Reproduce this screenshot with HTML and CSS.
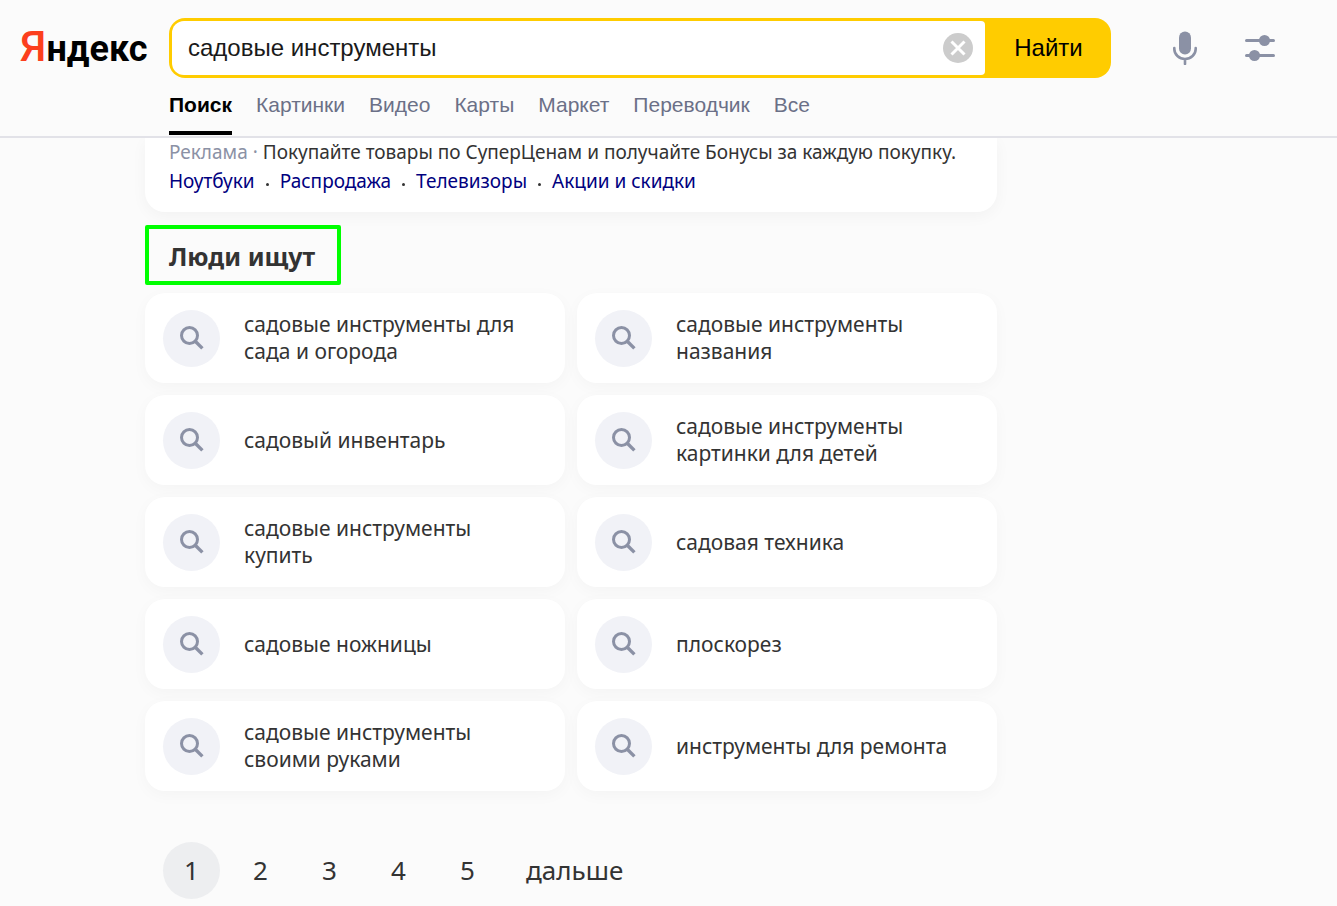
FILE: index.html
```html
<!DOCTYPE html>
<html lang="ru">
<head>
<meta charset="utf-8">
<meta name="viewport" content="width=device-width, initial-scale=1">
<title>садовые инструменты — Яндекс</title>
<link rel="stylesheet" href="styles.css">
</head>
<body>
<svg class="defs" aria-hidden="true">
  <symbol id="lens" viewBox="0 0 24 24"><circle cx="9.5" cy="9.5" r="8" fill="none" stroke="currentColor" stroke-width="3"/><path d="M15 15l7.400 7.400" stroke="currentColor" stroke-width="3.400"/></symbol>
</svg>
<header class="header">
  <div class="header-row">
    <a class="logo" href="#"><span class="logo-first">Я</span>ндекс</a>
    <form class="search">
      <div class="search-field">
        <input class="search-input" type="text" aria-label="Запрос" value="садовые инструменты">
        <button class="clear" type="reset" aria-label="Очистить">
          <svg width="30" height="30" viewBox="0 0 30 30"><circle cx="15" cy="15" r="15" fill="#ccc"/><path d="M8.500 8.500l13 13M21.500 8.500l-13 13" stroke="#fff" stroke-width="3"/></svg>
        </button>
      </div>
      <button class="search-button" type="button">Найти</button>
    </form>
    <div class="tools">
      <button class="tool" type="button" aria-label="Голосовой поиск">
        <svg width="24" height="34" viewBox="0 0 24 34"><rect x="6" y="0.500" width="12" height="23" rx="6" fill="#8b91a5"/><path d="M1.300 17v1a10.700 10 0 0 0 21.400 0v-1M12 28v5" fill="none" stroke="#8b91a5" stroke-width="2.600" stroke-linecap="round"/></svg>
      </button>
      <button class="tool" type="button" aria-label="Настройки">
        <svg width="30" height="26" viewBox="0 0 30 26"><path d="M1.500 5.500h27M1.500 20.500h27" stroke="#8b91a5" stroke-width="3" stroke-linecap="round"/><circle cx="19.500" cy="5.500" r="5.500" fill="#8b91a5"/><circle cx="9.500" cy="20.500" r="5.500" fill="#8b91a5"/></svg>
      </button>
    </div>
  </div>
  <nav class="tabs">
    <a class="tab tab-active" href="#">Поиск</a>
    <a class="tab" href="#">Картинки</a>
    <a class="tab" href="#">Видео</a>
    <a class="tab" href="#">Карты</a>
    <a class="tab" href="#">Маркет</a>
    <a class="tab" href="#">Переводчик</a>
    <a class="tab" href="#">Все</a>
  </nav>
</header>
<main class="content">
  <section class="ad">
    <p class="ad-text"><span class="ad-label">Реклама ·</span> Покупайте товары по СуперЦенам и получайте Бонусы за каждую покупку.</p>
    <div class="ad-links"><a href="#">Ноутбуки</a><span class="dot"></span><a href="#">Распродажа</a><span class="dot"></span><a href="#">Телевизоры</a><span class="dot"></span><a href="#">Акции и скидки</a></div>
  </section>
  <h2 class="title">Люди ищут</h2>
  <div class="grid">
    <a class="card" href="#"><span class="lens"><svg><use href="#lens"/></svg></span><span class="query">садовые инструменты для сада и огорода</span></a>
    <a class="card" href="#"><span class="lens"><svg><use href="#lens"/></svg></span><span class="query">садовые инструменты названия</span></a>
    <a class="card" href="#"><span class="lens"><svg><use href="#lens"/></svg></span><span class="query">садовый инвентарь</span></a>
    <a class="card" href="#"><span class="lens"><svg><use href="#lens"/></svg></span><span class="query">садовые инструменты картинки для детей</span></a>
    <a class="card" href="#"><span class="lens"><svg><use href="#lens"/></svg></span><span class="query">садовые инструменты купить</span></a>
    <a class="card" href="#"><span class="lens"><svg><use href="#lens"/></svg></span><span class="query">садовая техника</span></a>
    <a class="card" href="#"><span class="lens"><svg><use href="#lens"/></svg></span><span class="query">садовые ножницы</span></a>
    <a class="card" href="#"><span class="lens"><svg><use href="#lens"/></svg></span><span class="query">плоскорез</span></a>
    <a class="card" href="#"><span class="lens"><svg><use href="#lens"/></svg></span><span class="query">садовые инструменты своими руками</span></a>
    <a class="card" href="#"><span class="lens"><svg><use href="#lens"/></svg></span><span class="query">инструменты для ремонта</span></a>
  </div>
  <nav class="pager" aria-label="Страницы">
    <a class="page page-current" href="#">1</a>
    <a class="page" href="#">2</a>
    <a class="page" href="#">3</a>
    <a class="page" href="#">4</a>
    <a class="page" href="#">5</a>
    <a class="page-next" href="#">дальше</a>
  </nav>
</main>
</body>
</html>
```
FILE: styles.css
```css
* { box-sizing: border-box; }
body {
  margin: 0;
  background: #fbfbfb;
  color: #333;
  font-family: "Noto Sans", sans-serif;
}
a { color: inherit; text-decoration: none; }
button { border: 0; padding: 0; background: none; cursor: pointer; }
svg { display: block; }
.defs { display: none; }

.header {
  position: relative;
  z-index: 1;
  padding-top: 18px;
  background: #fbfbfb;
  border-bottom: 2px solid #e2e2e8;
  font-family: "Liberation Sans", Arial, sans-serif;
}
.header-row { display: flex; align-items: center; }
.logo {
  flex: 0 0 169px;
  padding: 0 0 2px 20px;
  font: bold 36px/48px Roboto, sans-serif;
  color: #000;
}
.logo-first { color: #fc3f1d; font-weight: 500; font-size: 43px; }
.search {
  display: flex;
  flex: 0 1 942px;
  height: 60px;
  padding: 3px;
  background: #fc0;
  border-radius: 16px;
}
.search-field {
  display: flex;
  flex: 1;
  align-items: center;
  min-width: 0;
  padding: 0 12px 0 16px;
  background: #fff;
  border-radius: 12px 4px 4px 12px;
}
.search-input {
  flex: 1;
  min-width: 0;
  padding: 0;
  border: 0;
  outline: 0;
  background: none;
  color: #1a1a1a;
  font: 24px "Liberation Sans", Arial, sans-serif;
}
.search-button {
  flex: 0 0 123px;
  padding-left: 4px;
  color: #000;
  font: 24px "Liberation Sans", Arial, sans-serif;
}
.tools {
  display: flex;
  align-items: center;
  gap: 48px;
  margin-left: auto;
  padding-right: 62px;
}
.tabs {
  display: flex;
  gap: 24px;
  padding: 0 0 1px 169px;
}
.tab {
  padding: 15px 0 14px;
  color: #6b7087;
  font-size: 21px;
  line-height: 24px;
  border-bottom: 4px solid transparent;
}
.tab-active { color: #000; font-weight: bold; border-color: #000; }

.content { max-width: 997px; padding-left: 145px; }
.ad {
  padding: 0 24px 16px;
  background: #fff;
  border-radius: 0 0 20px 20px;
  box-shadow: 0 4px 16px rgba(0, 0, 0, 0.04);
  font-size: 19px;
  line-height: 29px;
}
.ad-text { margin: 0; }
.ad-label { color: #8b91a5; }
.ad-links { display: flex; align-items: center; gap: 11px; color: #00007f; }
.dot { width: 3px; height: 3px; margin-top: 6px; border-radius: 50%; background: #333; }
.title {
  width: max-content;
  margin: 13px 0 8px;
  padding: 13px 22px 11px 20px;
  border: 4px solid #0f0;
  border-radius: 2px;
  font-size: 25px;
  line-height: 28px;
}
.grid {
  display: grid;
  grid-template-columns: 1fr 1fr;
  gap: 12px;
}
.card {
  display: flex;
  align-items: center;
  gap: 24px;
  min-height: 90px;
  padding: 0 32px 0 18px;
  background: #fff;
  border-radius: 20px;
  box-shadow: 0 4px 16px rgba(0, 0, 0, 0.03);
  font-size: 21px;
  line-height: 27px;
}
.lens {
  display: flex;
  flex: none;
  align-items: center;
  justify-content: center;
  width: 57px;
  height: 57px;
  border-radius: 50%;
  background: #f1f2f7;
  color: #8b91a5;
}
.lens svg { width: 24px; height: 24px; }
.pager {
  display: flex;
  gap: 12px;
  margin-top: 51px;
  padding: 0 18px 6px;
  font-size: 26px;
  line-height: 57px;
}
.page { width: 57px; text-align: center; border-radius: 50%; }
.page-current { background: #edeef0; }
.page-next { padding-left: 18px; }
```
